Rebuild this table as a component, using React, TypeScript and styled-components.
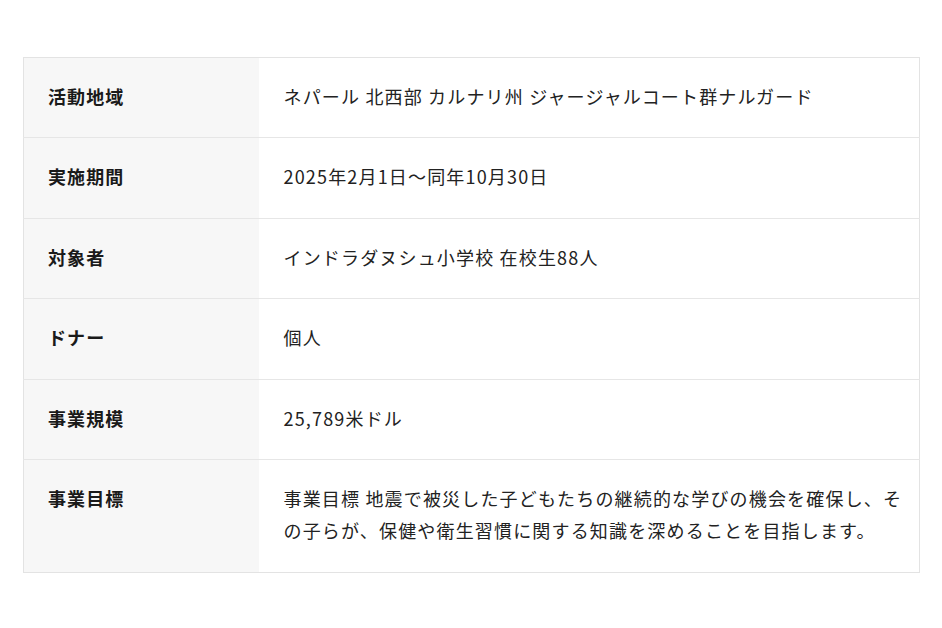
import { createGlobalStyle, styled } from "styled-components";

const GlobalStyle = createGlobalStyle`
  html, body {
    margin: 0;
    padding: 0;
    background: #ffffff;
  }
  body {
    font-family: "Noto Sans CJK JP", "Noto Sans", sans-serif;
    color: #222222;
  }
`;

const Page = styled.div`
  padding: 57px 22px 0 23px;
`;

const Table = styled.table`
  width: 897px;
  border-collapse: collapse;
  border: 1px solid #e3e3e3;
  table-layout: fixed;
`;

const Row = styled.tr`
  border-top: 1px solid #e6e6e6;
  &:first-child {
    border-top: none;
  }
`;

const Label = styled.th`
  width: 235px;
  box-sizing: border-box;
  padding: 22px 20px 25px 24px;
  background: #f7f7f7;
  text-align: left;
  vertical-align: top;
  font-size: 18px;
  line-height: 1.8;
  font-weight: 700;
  letter-spacing: 0.06em;
  color: #1a1a1a;
`;

const Value = styled.td`
  padding: 22px 10px 25px 25px;
  vertical-align: top;
  font-size: 18px;
  line-height: 1.8;
  font-weight: 400;
  letter-spacing: 0.065em;
  color: #222222;
  background: #ffffff;
`;

const rows: { label: string; value: string }[] = [
  { label: "活動地域", value: "ネパール 北西部 カルナリ州 ジャージャルコート群ナルガード" },
  { label: "実施期間", value: "2025年2月1日〜同年10月30日" },
  { label: "対象者", value: "インドラダヌシュ小学校 在校生88人" },
  { label: "ドナー", value: "個人" },
  { label: "事業規模", value: "25,789米ドル" },
  {
    label: "事業目標",
    value:
      "事業目標 地震で被災した子どもたちの継続的な学びの機会を確保し、その子らが、保健や衛生習慣に関する知識を深めることを目指します。",
  },
];

export default function App() {
  return (
    <>
      <GlobalStyle />
      <Page>
        <Table>
          <tbody>
            {rows.map((r) => (
              <Row key={r.label}>
                <Label>{r.label}</Label>
                <Value>{r.value}</Value>
              </Row>
            ))}
          </tbody>
        </Table>
      </Page>
    </>
  );
}
